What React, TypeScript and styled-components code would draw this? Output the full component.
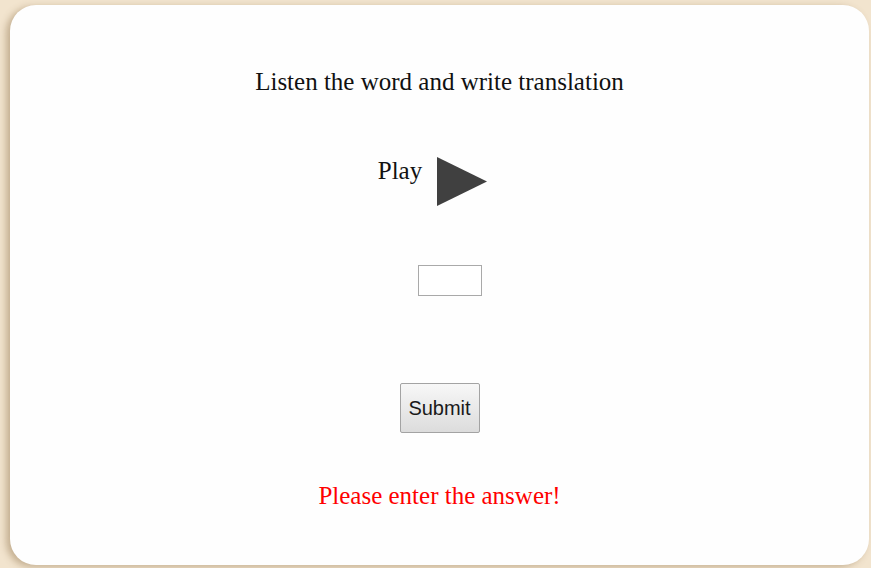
import React, { useState } from 'react';
import styled, { createGlobalStyle } from 'styled-components';

const GlobalStyle = createGlobalStyle`
  html, body {
    margin: 0;
    padding: 0;
    background-color: #f2e4ce;
    font-family: "Liberation Serif", "Times New Roman", serif;
  }
`;

const Page = styled.div`
  width: 871px;
  height: 568px;
  overflow: hidden;
  padding: 5px 2px 3px 10px;
  box-sizing: border-box;
`;

const Card = styled.main`
  height: 100%;
  background-color: #fefefe;
  border-radius: 26px;
  box-shadow: -4px 2px 7px rgba(140, 110, 70, 0.45);
  display: flex;
  flex-direction: column;
  align-items: center;
  padding-top: 63px;
  box-sizing: border-box;
`;

const Title = styled.h1`
  margin: 0;
  font-size: 25px;
  font-weight: normal;
  color: #111;
`;

const PlayRow = styled.div`
  display: flex;
  align-items: flex-start;
  gap: 15px;
  margin-top: 61px;
  padding-right: 14px;
`;

const PlayLabel = styled.span`
  font-size: 25px;
  line-height: 1.1;
  color: #111;
`;

const PlayButton = styled.button`
  padding: 0;
  border: none;
  background: none;
  cursor: pointer;
  display: block;
  line-height: 0;
`;

const AnswerInput = styled.input`
  margin-top: 59px;
  margin-left: 21px;
  width: 64px;
  height: 31px;
  box-sizing: border-box;
  border: 1px solid #a9a9a9;
  padding: 2px 4px;
  font-size: 16px;
  outline: none;
`;

const SubmitButton = styled.button`
  margin-top: 87px;
  width: 80px;
  height: 50px;
  border: 1px solid #a3a3a3;
  border-radius: 2px;
  background: linear-gradient(#f7f7f7, #dcdcdc);
  font-family: "Liberation Sans", Arial, sans-serif;
  font-size: 20px;
  color: #1a1a1a;
  cursor: pointer;
`;

const Message = styled.p`
  margin: 49px 0 0;
  font-size: 25px;
  color: #ff0000;
`;

const App: React.FC = () => {
  const [answer, setAnswer] = useState('');

  return (
    <>
      <GlobalStyle />
      <Page>
        <Card>
          <Title>Listen the word and write translation</Title>
          <PlayRow>
            <PlayLabel>Play</PlayLabel>
            <PlayButton aria-label="Play">
              <svg width="50" height="49" viewBox="0 0 50 49">
                <polygon points="0,0 50,24.5 0,49" fill="#404040" />
              </svg>
            </PlayButton>
          </PlayRow>
          <AnswerInput value={answer} onChange={(e) => setAnswer(e.target.value)} />
          <SubmitButton>Submit</SubmitButton>
          <Message>Please enter the answer!</Message>
        </Card>
      </Page>
    </>
  );
};

export default App;
